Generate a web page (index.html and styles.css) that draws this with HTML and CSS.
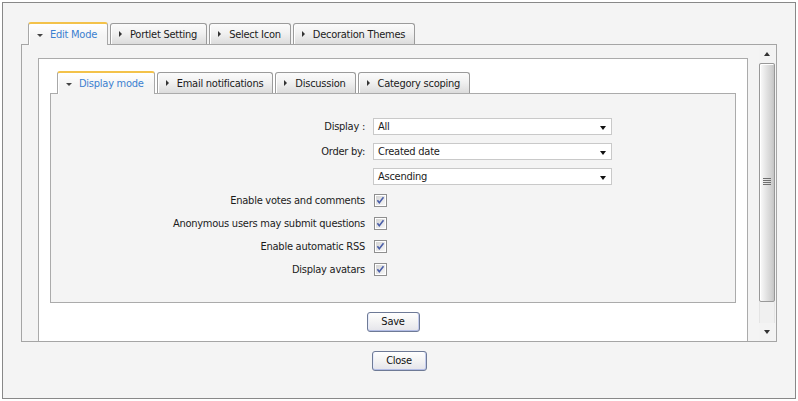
FILE: index.html
```html
<!DOCTYPE html>
<html>
<head>
<meta charset="utf-8">
<link rel="stylesheet" href="styles.css">
</head>
<body>
<div class="window">
  <div class="tabbar">
    <div class="tab active"><span class="arr-down"></span><span class="tab-label">Edit Mode</span></div>
    <div class="tab"><span class="arr-right"></span><span class="tab-label">Portlet Setting</span></div>
    <div class="tab"><span class="arr-right"></span><span class="tab-label">Select Icon</span></div>
    <div class="tab"><span class="arr-right"></span><span class="tab-label">Decoration Themes</span></div>
  </div>
  <div class="mainbox">
    <div class="viewport">
      <div class="panel">
        <div class="tabbar">
          <div class="tab active"><span class="arr-down"></span><span class="tab-label">Display mode</span></div>
          <div class="tab"><span class="arr-right"></span><span class="tab-label">Email notifications</span></div>
          <div class="tab"><span class="arr-right"></span><span class="tab-label">Discussion</span></div>
          <div class="tab"><span class="arr-right"></span><span class="tab-label">Category scoping</span></div>
        </div>
        <div class="tabbody">
          <div class="form">
            <div class="row sel-row">
              <div class="lbl">Display :</div>
              <div class="select"><span>All</span><span class="caret"></span></div>
            </div>
            <div class="row sel-row">
              <div class="lbl">Order by:</div>
              <div class="select"><span>Created date</span><span class="caret"></span></div>
            </div>
            <div class="row sel-row">
              <div class="lbl"></div>
              <div class="select"><span>Ascending</span><span class="caret"></span></div>
            </div>
            <div class="row chk-row">
              <div class="lbl">Enable votes and comments</div>
              <svg class="chk" width="13" height="13" viewBox="0 0 13 13"><use href="#cb"/></svg>
            </div>
            <div class="row chk-row">
              <div class="lbl">Anonymous users may submit questions</div>
              <svg class="chk" width="13" height="13" viewBox="0 0 13 13"><use href="#cb"/></svg>
            </div>
            <div class="row chk-row">
              <div class="lbl">Enable automatic RSS</div>
              <svg class="chk" width="13" height="13" viewBox="0 0 13 13"><use href="#cb"/></svg>
            </div>
            <div class="row chk-row">
              <div class="lbl">Display avatars</div>
              <svg class="chk" width="13" height="13" viewBox="0 0 13 13"><use href="#cb"/></svg>
            </div>
          </div>
        </div>
        <div class="btnrow save-row"><button class="btn btn-save">Save</button></div>
      </div>
    </div>
    <div class="scrollbar">
      <div class="sb-btn"><span class="sb-up"></span></div>
      <div class="sb-track">
        <div class="thumb"><div class="grip"><i></i><i></i><i></i><i></i></div></div>
      </div>
      <div class="sb-btn"><span class="sb-down"></span></div>
    </div>
  </div>
  <div class="btnrow close-row"><button class="btn btn-close">Close</button></div>
</div>
<svg width="0" height="0" class="defs">
  <defs>
    <linearGradient id="cbg" x1="0" y1="0" x2="1" y2="1">
      <stop offset="0" stop-color="#d4d4d4"/>
      <stop offset="1" stop-color="#f7f7f7"/>
    </linearGradient>
    <symbol id="cb" viewBox="0 0 13 13">
      <rect x="0.5" y="0.5" width="12" height="12" fill="#fff" stroke="#8f8f8f"/>
      <rect x="2" y="2" width="9" height="9" fill="url(#cbg)"/>
      <path d="M3.4 6.2 L5.3 8.7 L9.5 3.3" fill="none" stroke="#4a5ea8" stroke-width="1.6"/>
    </symbol>
  </defs>
</svg>
</body>
</html>
```

FILE: styles.css
```css
html, body {
  margin: 0;
  padding: 0;
  background: #ffffff;
}
body {
  font-family: "DejaVu Sans Condensed", "DejaVu Sans", sans-serif;
  font-size: 11px;
  letter-spacing: -0.25px;
  color: #1b1b1b;
}
.defs {
  position: absolute;
  width: 0;
  height: 0;
}
.window {
  box-sizing: border-box;
  margin: 2px 0 0 2px;
  width: 794px;
  height: 397px;
  border: 1px solid #888888;
  background: #f4f4f4;
  padding: 19px 18px 0 18px;
}
.tabbar {
  display: flex;
  align-items: flex-end;
  gap: 2px;
  height: 22px;
  margin-left: 7px;
  position: relative;
  z-index: 2;
}
.tab {
  box-sizing: border-box;
  height: 21px;
  display: flex;
  align-items: center;
  padding: 0 9px 0 8px;
  border: 1px solid #9b9b9b;
  border-bottom: none;
  border-radius: 3px 3px 0 0;
  background: linear-gradient(#fbfbfb, #f1f1f1 45%, #dcdcdc);
  box-shadow: inset 1px 0 0 #ffffff;
  color: #1b1b1b;
  white-space: nowrap;
}
.tab.active {
  height: 23px;
  margin-bottom: -1px;
  border-top: 2px solid #f3c24a;
  border-color: #f3c24a #a8a8a8 #a8a8a8 #a8a8a8;
  background: linear-gradient(#ffffff, #f4f4f4 60%);
  color: #3b7fd0;
  padding-right: 10px;
}
.arr-right {
  width: 0;
  height: 0;
  border-top: 3px solid transparent;
  border-bottom: 3px solid transparent;
  border-left: 3px solid #333333;
  margin-right: 8px;
}
.arr-down {
  width: 0;
  height: 0;
  border-left: 3px solid transparent;
  border-right: 3px solid transparent;
  border-top: 3px solid #444444;
  margin: 2px 7px 0 0;
}
.mainbox {
  box-sizing: border-box;
  height: 298px;
  border: 1px solid #a5a5a5;
  display: flex;
  background: #f4f4f4;
}
.viewport {
  flex: 1;
  overflow: hidden;
  padding: 13px 0 0 16px;
}
.panel {
  box-sizing: border-box;
  width: 710px;
  border: 1px solid #ababab;
  background: #ffffff;
  padding: 12px 11px 14px 11px;
}
.tabbody {
  box-sizing: border-box;
  height: 210px;
  border: 1px solid #ababab;
  background: #f4f4f4;
  padding-top: 24px;
}
.form {
  display: flex;
  flex-direction: column;
}
.row {
  display: flex;
  align-items: center;
  gap: 8px;
}
.lbl {
  width: 314px;
  flex: none;
  text-align: right;
  white-space: nowrap;
}
.sel-row {
  height: 17px;
  margin-bottom: 8px;
}
.sel-row:nth-child(3) {
  margin-bottom: 9px;
}
.chk-row {
  height: 13px;
  margin-bottom: 10px;
}
.select {
  box-sizing: border-box;
  width: 239px;
  height: 17px;
  border: 1px solid #c9c9c9;
  background: #ffffff;
  display: flex;
  align-items: center;
  justify-content: space-between;
  padding: 0 5px 0 4px;
}
.caret {
  width: 0;
  height: 0;
  border-left: 3px solid transparent;
  border-right: 3px solid transparent;
  border-top: 4px solid #111111;
  margin-top: 2px;
}
.chk {
  display: block;
  margin-left: 1px;
}
.btnrow {
  display: flex;
  justify-content: center;
}
.save-row {
  margin-top: 9px;
}
.close-row {
  margin-top: 9px;
}
.btn {
  box-sizing: border-box;
  height: 20px;
  font-family: inherit;
  font-size: 11px;
  letter-spacing: -0.25px;
  color: #111111;
  border: 1px solid #6e7a96;
  border-radius: 3px;
  background: linear-gradient(#ffffff, #f4f4f4 45%, #e4e4ea);
  box-shadow: inset 0 -1px 0 #b3bde6, inset 1px 0 0 #e6ebfb, inset -1px 0 0 #c3cbec;
  padding: 0;
  line-height: 18px;
}
.btn-save {
  width: 53px;
}
.btn-close {
  width: 55px;
}
.scrollbar {
  width: 16px;
  margin-right: 1px;
  display: flex;
  flex-direction: column;
  background: #f3f3f3;
}
.sb-btn {
  height: 18px;
  display: flex;
  align-items: center;
  justify-content: center;
  background: #f3f3f3;
}
.sb-up {
  width: 0;
  height: 0;
  border-left: 3px solid transparent;
  border-right: 3px solid transparent;
  border-bottom: 4px solid #333333;
}
.sb-down {
  width: 0;
  height: 0;
  border-left: 3px solid transparent;
  border-right: 3px solid transparent;
  border-top: 4px solid #333333;
}
.sb-track {
  flex: 1;
  background: #f0f0f0;
  border-left: 1px solid #e4e4e4;
  border-right: 1px solid #e4e4e4;
}
.thumb {
  box-sizing: border-box;
  margin-left: -1px;
  margin-right: -1px;
  height: 239px;
  border: 1px solid #989898;
  border-radius: 2px;
  background: linear-gradient(90deg, #fbfbfb, #e6e6e6 40%, #cfcfcf 85%, #c4c4c4);
  box-shadow: inset 1px 1px 0 #ffffff;
  position: relative;
}
.grip {
  position: absolute;
  left: 3px;
  top: 114px;
  display: flex;
  flex-direction: column;
  gap: 1px;
}
.grip i {
  display: block;
  width: 8px;
  height: 1px;
  background: #6f6f6f;
}
```
